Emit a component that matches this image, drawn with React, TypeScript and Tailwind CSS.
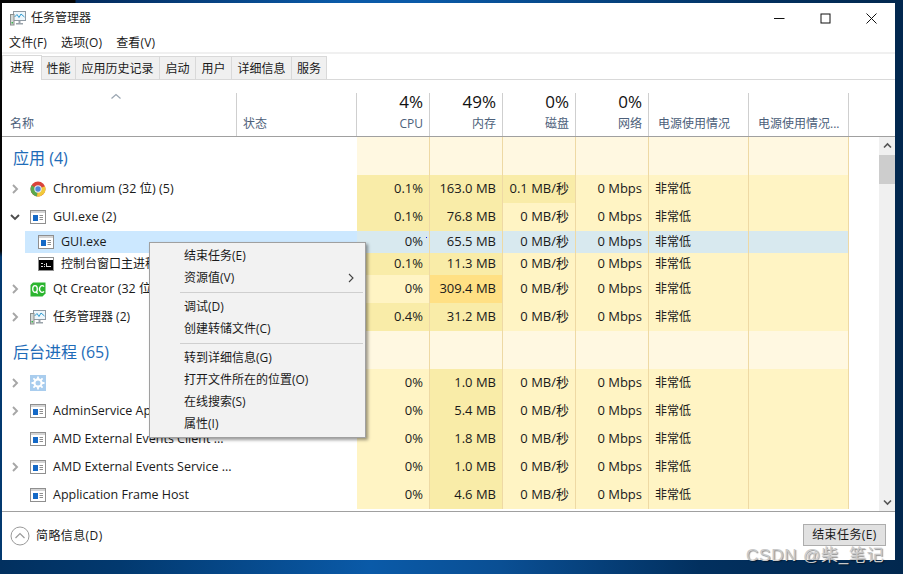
import React from "react";

const font = { fontFamily: '"Open Sans","Noto Sans CJK SC",sans-serif' };

type Tone = "l" | "m" | "s" | "b";
const toneClass: Record<Tone, string> = {
  l: "bg-[#fff4c4]",
  m: "bg-[#f9eca8]",
  s: "bg-[#ffe084]",
  b: "bg-[#d8e9ef]",
};

function Chevron({ open }: { open?: boolean }) {
  return (
    <svg width="10" height="10" viewBox="0 0 10 10" fill="none" stroke={open ? "#4d4d4d" : "#a6a6a6"} strokeWidth="1.9">
      {open ? <path d="M1 3 L5 7 L9 3" /> : <path d="M3 1 L7 5 L3 9" />}
    </svg>
  );
}

function AppIcon() {
  return (
    <svg width="16" height="14" viewBox="0 0 16 14">
      <rect x="0.5" y="0.5" width="15" height="13" fill="#fff" stroke="#8f8f8f" />
      <rect x="1" y="1" width="14" height="2" fill="#d4d4d4" />
      <rect x="3" y="5" width="5" height="6" fill="#1469c7" />
      <path d="M9.5 5.5h3.5M9.5 7.5h3.5M9.5 9.5h3.5" stroke="#8f8f8f" />
    </svg>
  );
}

function ChromeIcon() {
  return (
    <svg width="16" height="16" viewBox="0 0 16 16">
      <circle cx="8" cy="8" r="7.5" fill="#d9433a" />
      <path d="M8 8 L1.5 4.3 A7.5 7.5 0 0 0 7 15.4 Z" fill="#5aa84d" />
      <path d="M8 8 L15 5.2 A7.5 7.5 0 0 1 7 15.4 Z" fill="#f0c93a" />
      <circle cx="8" cy="8" r="3.7" fill="#e8eef5" />
      <circle cx="8" cy="8" r="2.7" fill="#4f86d9" />
    </svg>
  );
}

function ConsoleIcon() {
  return (
    <svg width="16" height="14" viewBox="0 0 16 14">
      <rect x="0.5" y="0.5" width="15" height="13" fill="#fff" stroke="#8f8f8f" />
      <rect x="1" y="3" width="14" height="10" fill="#000" />
      <path d="M3 6h2v1H3v2h2v1H3zM6 7h1v1H6zM6 9h1v1H6zM8 6h1v3h2v1H8zM11 9h2v1h-2z" fill="#ddd" />
    </svg>
  );
}

function QtIcon() {
  return (
    <svg width="16" height="15" viewBox="0 0 16 15">
      <path d="M3 0.5H15.5V11.5L12.5 14.5H0.5V3Z" fill="#2bb52f" />
      <ellipse cx="5" cy="7" rx="2.3" ry="3.4" fill="none" stroke="#fff" strokeWidth="1.3" />
      <path d="M6 9.5l1.6 2.2" fill="none" stroke="#fff" strokeWidth="1.3" />
      <path d="M14 4.6a2.6 3.4 0 1 0 0 4.8" fill="none" stroke="#fff" strokeWidth="1.3" />
    </svg>
  );
}

function TaskIcon() {
  return (
    <svg width="16" height="16" viewBox="0 0 16 16">
      <rect x="3.5" y="1.5" width="12" height="9" fill="#eef6fb" stroke="#8f9aa3" />
      <path d="M4.5 7 L7 4.5 L9 7.5 L11 4 L14.5 7" fill="none" stroke="#2f9bd0" />
      <rect x="0.5" y="4.5" width="3.5" height="10.5" fill="#d3d8d6" stroke="#8a8f8d" />
      <rect x="1.5" y="12" width="1.5" height="1.5" fill="#39b54a" />
      <path d="M9.5 11v2" stroke="#9aa3aa" strokeWidth="2" />
      <rect x="6" y="13" width="7" height="1.5" fill="#9aa3aa" />
    </svg>
  );
}

function GearIcon() {
  return (
    <svg width="16" height="16" viewBox="0 0 16 16">
      <rect width="16" height="16" fill="#a9cdee" />
      <circle cx="8" cy="8" r="3.6" fill="none" stroke="#fff" strokeWidth="2.2" />
      <path d="M8 1.5v2.5M8 12v2.5M1.5 8H4M12 8h2.5M3.4 3.4l1.8 1.8M10.8 10.8l1.8 1.8M12.6 3.4l-1.8 1.8M5.2 10.8l-1.8 1.8" stroke="#fff" strokeWidth="1.8" />
    </svg>
  );
}

const GRID = "grid grid-cols-[235px_120px_73px_73px_73px_73px_100px_100px] shrink-0";

type Row = {
  name: string;
  icon: React.ReactNode;
  h: string;
  chev?: "open" | "closed";
  child?: boolean;
  selected?: boolean;
  cjk?: boolean;
  cpu: [string, Tone];
  mem: [string, Tone];
  disk: [string, Tone];
};

const val = (x: string, t: Tone): [string, Tone] => [x, t];

const appRows: Row[] = [
  { name: "Chromium (32 位) (5)", icon: <ChromeIcon />, h: "h-[28px]", chev: "closed", cpu: val("0.1%", "m"), mem: val("163.0 MB", "m"), disk: val("0.1 MB/秒", "m") },
  { name: "GUI.exe (2)", icon: <AppIcon />, h: "h-[28px]", chev: "open", cpu: val("0.1%", "m"), mem: val("76.8 MB", "m"), disk: val("0 MB/秒", "l") },
  { name: "GUI.exe", icon: <AppIcon />, h: "h-[22px]", child: true, selected: true, cpu: val("0%", "b"), mem: val("65.5 MB", "b"), disk: val("0 MB/秒", "b") },
  { name: "控制台窗口主进程", icon: <ConsoleIcon />, h: "h-[22px]", child: true, cjk: true, cpu: val("0.1%", "m"), mem: val("11.3 MB", "m"), disk: val("0 MB/秒", "l") },
  { name: "Qt Creator (32 位) (2)", icon: <QtIcon />, h: "h-[28px]", chev: "closed", cpu: val("0%", "l"), mem: val("309.4 MB", "s"), disk: val("0 MB/秒", "l") },
  { name: "任务管理器 (2)", icon: <TaskIcon />, h: "h-[28px]", chev: "closed", cjk: true, cpu: val("0.4%", "m"), mem: val("31.2 MB", "m"), disk: val("0 MB/秒", "l") },
];

const bgRows: Row[] = [
  { name: "", icon: <GearIcon />, h: "h-[28px]", chev: "closed", cpu: val("0%", "l"), mem: val("1.0 MB", "m"), disk: val("0 MB/秒", "l") },
  { name: "AdminService Application", icon: <AppIcon />, h: "h-[28px]", chev: "closed", cpu: val("0%", "l"), mem: val("5.4 MB", "m"), disk: val("0 MB/秒", "l") },
  { name: "AMD External Events Client ...", icon: <AppIcon />, h: "h-[28px]", cpu: val("0%", "l"), mem: val("1.8 MB", "m"), disk: val("0 MB/秒", "l") },
  { name: "AMD External Events Service ...", icon: <AppIcon />, h: "h-[28px]", chev: "closed", cpu: val("0%", "l"), mem: val("1.0 MB", "m"), disk: val("0 MB/秒", "l") },
  { name: "Application Frame Host", icon: <AppIcon />, h: "h-[28px]", cpu: val("0%", "l"), mem: val("4.6 MB", "m"), disk: val("0 MB/秒", "l") },
];

function Cell({ v, t, align = "right" }: { v?: string; t: Tone; align?: "right" | "left" }) {
  return (
    <div
      className={`${toneClass[t]} border-r border-[#eed9a4] flex items-center text-[#1a1a1a] whitespace-nowrap ${
        align === "right" ? "justify-end pr-[6px] text-[13px]" : "pl-[6px] text-[12px]"
      }`}
    >
      {v}
    </div>
  );
}

function ProcessRow({ r }: { r: Row }) {
  const blue = r.selected;
  return (
    <div className={`${GRID} ${r.h}`}>
      <div className={`col-span-2 flex items-center text-[#1a1a1a] whitespace-nowrap overflow-hidden ${r.cjk ? "text-[12px]" : "text-[12.5px]"} ${r.child ? "ml-[23px] pl-[13px]" : ""} ${blue ? "bg-[#cce8ff]" : ""}`}>
        {!r.child && (
          <div className="w-[28px] pl-[8px] flex items-center shrink-0">
            {r.chev && <Chevron open={r.chev === "open"} />}
          </div>
        )}
        <div className="w-[23px] shrink-0 flex items-center">{r.icon}</div>
        <span>{r.name}</span>
      </div>
      <Cell v={r.cpu[0]} t={r.cpu[1]} />
      <Cell v={r.mem[0]} t={r.mem[1]} />
      <Cell v={r.disk[0]} t={r.disk[1]} />
      <Cell v="0 Mbps" t={blue ? "b" : "l"} />
      <Cell v="非常低" t={blue ? "b" : "l"} align="left" />
      <Cell t={blue ? "b" : "l"} />
    </div>
  );
}

function GroupRow({ title, h }: { title: string; h: string }) {
  return (
    <div className={`${GRID} ${h}`}>
      <div className="col-span-2 flex items-center pl-[11px] pt-[4px] text-[16px] text-[#1e6cb8] whitespace-nowrap">{title}</div>
      {[0, 1, 2, 3, 4, 5].map((i) => (
        <div key={i} className="bg-[#fff8e1] border-r border-[#eed9a4]" />
      ))}
    </div>
  );
}

function HeadNum({ pct, label }: { pct: string; label: string }) {
  return (
    <div className="border-r border-[#cfcfcf] flex flex-col items-end pr-[6px]">
      <span className="text-[17px] leading-[20px] text-[#111] -mt-[1px]">{pct}</span>
      <span className="text-[12px] leading-[16px] mt-[4px] text-[#4c607a]">{label}</span>
    </div>
  );
}

const Item = ({ children, arrow }: { children: React.ReactNode; arrow?: boolean }) => (
  <div className="h-[22px] flex items-center pl-[34px] pr-[10px] justify-between text-[12px] text-[#1a1a1a]">
    <span>{children}</span>
    {arrow && (
      <svg width="8" height="10" viewBox="0 0 8 10" fill="none" stroke="#444" strokeWidth="1.1">
        <path d="M2 1 L6 5 L2 9" />
      </svg>
    )}
  </div>
);

const MenuSep = () => <div className="h-[7px] flex items-center pl-[30px] pr-[2px]"><div className="h-px w-full bg-[#cfcfcf]" /></div>;

export default function App() {
  const tabs = [
    ["性能", "w-[34px]"],
    ["应用历史记录", "w-[84px]"],
    ["启动", "w-[36px]"],
    ["用户", "w-[36px]"],
    ["详细信息", "w-[60px]"],
    ["服务", "w-[35px]"],
  ];
  return (
    <div className="w-[903px] h-[574px] flex flex-col relative overflow-hidden" style={font}>
      <div className="h-[3px] shrink-0 bg-[linear-gradient(90deg,#050505_0,#050505_75px,#03295a_76px,#0a5aa8_340px,#0a5aa8_420px,#02305f_760px,#02284f_903px)]" />
      <div className="flex flex-1 min-h-0">
        <div className="w-[2px] shrink-0 bg-[linear-gradient(180deg,#050505_0,#050505_248px,#03396f_254px,#03396f_557px)]" />
        <div className="flex-1 min-w-0 bg-white flex flex-col">
          {/* title bar */}
          <div className="h-[30px] shrink-0 flex items-center">
            <div className="ml-[8px] mr-[5px] flex"><TaskIcon /></div>
            <span className="text-[12px] text-[#1a1a1a]">任务管理器</span>
            <div className="ml-auto flex items-center">
              <div className="w-[46px] flex justify-center">
                <svg width="11" height="11" viewBox="0 0 11 11"><path d="M0 5.5h10.5" stroke="#111" strokeWidth="1" /></svg>
              </div>
              <div className="w-[46px] flex justify-center">
                <svg width="11" height="11" viewBox="0 0 11 11"><rect x="1" y="1" width="9" height="9" fill="none" stroke="#111" /></svg>
              </div>
              <div className="w-[46px] flex justify-center mr-[1px]">
                <svg width="11" height="11" viewBox="0 0 11 11"><path d="M0.5 0.5l10 10M10.5 0.5l-10 10" stroke="#111" /></svg>
              </div>
            </div>
          </div>
          {/* menu */}
          <div className="h-[19px] shrink-0 flex items-center gap-[14px] pl-[7px] text-[12px] text-[#1a1a1a] tracking-[0.15px]">
            <span>文件(F)</span>
            <span>选项(O)</span>
            <span>查看(V)</span>
          </div>
          <div className="h-[2px] shrink-0 bg-[#f0f0f0]" />
          {/* tabs */}
          <div className="h-[26px] shrink-0 flex items-end border-b border-[#d9d9d9]">
            <div className="w-[40px] h-[25px] -mb-px bg-white border border-b-0 border-[#d9d9d9] flex items-center justify-center text-[12px] text-[#1a1a1a] relative">进程</div>
            {tabs.map(([t, w]) => (
              <div key={t} className={`${w} h-[23px] pt-[2px] bg-[#f0f0f0] border border-l-0 border-b-0 border-[#d9d9d9] flex items-center justify-center text-[12px] text-[#1a1a1a]`}>
                {t}
              </div>
            ))}
          </div>
          {/* table */}
          <div className="flex-1 min-h-0 flex mt-[13px]">
            <div className="flex-1 min-w-0 flex flex-col">
              <div className={`${GRID} h-[43px]`}>
                <div className="border-r border-[#cfcfcf] relative flex items-end pl-[8px] pb-[3px] text-[12px] text-[#4c607a]">
                  <span>名称</span>
                  <svg className="absolute left-[108px] top-0" width="12" height="7" viewBox="0 0 12 7" fill="none" stroke="#9aa5b1" strokeWidth="1.2">
                    <path d="M1.5 5.5 L6 1.5 L10.5 5.5" />
                  </svg>
                </div>
                <div className="border-r border-[#cfcfcf] flex items-end pl-[6px] pb-[3px] text-[12px] text-[#4c607a]">状态</div>
                <HeadNum pct="4%" label="CPU" />
                <HeadNum pct="49%" label="内存" />
                <HeadNum pct="0%" label="磁盘" />
                <HeadNum pct="0%" label="网络" />
                <div className="border-r border-[#cfcfcf] flex items-end pl-[9px] pb-[3px] text-[12px] text-[#4c607a]">电源使用情况</div>
                <div className="border-r border-[#cfcfcf] flex items-end pl-[9px] pb-[3px] text-[12px] text-[#4c607a] whitespace-nowrap">电源使用情况...</div>
              </div>
              <div className="h-px shrink-0 bg-[#a0a0a0]" />
              <div className="flex-1 min-h-0 overflow-hidden flex flex-col">
                <GroupRow title="应用 (4)" h="h-[38px]" />
                {appRows.map((r) => (
                  <ProcessRow key={r.name} r={r} />
                ))}
                <GroupRow title="后台进程 (65)" h="h-[38px]" />
                {bgRows.map((r) => (
                  <ProcessRow key={r.name + r.mem[0]} r={r} />
                ))}
              </div>
            </div>
            <div className="w-[16px] shrink-0 flex flex-col">
              <div className="h-[44px] border-b border-[#a0a0a0]" />
              <div className="flex-1 bg-[#f0f0f0] flex flex-col items-center">
                <svg className="mt-[5px]" width="9" height="7" viewBox="0 0 9 7" fill="none" stroke="#555" strokeWidth="1.6"><path d="M1 5.5 L4.5 2 L8 5.5" /></svg>
                <div className="w-full h-[29px] bg-[#cdcdcd] mt-[6px]" />
                <svg className="mt-auto mb-[5px]" width="9" height="7" viewBox="0 0 9 7" fill="none" stroke="#555" strokeWidth="1.6"><path d="M1 1.5 L4.5 5 L8 1.5" /></svg>
              </div>
            </div>
          </div>
          <div className="h-px shrink-0 bg-[#a0a0a0]" />
          {/* footer */}
          <div className="h-[48px] shrink-0 flex items-center">
            <svg className="ml-[8px]" width="20" height="20" viewBox="0 0 20 20" fill="none" stroke="#9a9a9a">
              <circle cx="10" cy="10" r="9" />
              <path d="M5.5 12 L10 7.5 L14.5 12" strokeWidth="1.2" />
            </svg>
            <span className="ml-[6px] text-[12px] text-[#1a1a1a] tracking-[0.4px]">简略信息(D)</span>
            <div className="ml-auto mr-[9px] mt-[-2px] w-[83px] h-[22px] bg-[#e1e1e1] border border-[#adadad] flex items-center justify-center text-[12px] text-[#1a1a1a] tracking-[0.4px]">结束任务(E)</div>
          </div>
        </div>
        <div className="w-[8px] shrink-0 bg-[#02284f]" />
      </div>
      <div className="h-[14px] shrink-0 bg-[linear-gradient(90deg,#02305f_0,#02396f_120px,#0a5aa8_370px,#0a4f94_500px,#02305f_700px,#02284f_903px)]" />

      {/* context menu */}
      <div className="absolute left-[149px] top-[242px] w-[217px] h-[196px] bg-[#f2f2f2] border border-[#a0a0a0] shadow-[2px_2px_3px_rgba(0,0,0,0.4)] pt-[2px]">
        <Item>结束任务(E)</Item>
        <Item arrow>资源值(V)</Item>
        <MenuSep />
        <Item>调试(D)</Item>
        <Item>创建转储文件(C)</Item>
        <MenuSep />
        <Item>转到详细信息(G)</Item>
        <Item>打开文件所在的位置(O)</Item>
        <Item>在线搜索(S)</Item>
        <Item>属性(I)</Item>
      </div>

      {/* watermark */}
      <div className="absolute left-[746px] top-[543px] text-[17px] tracking-[0.8px] text-[#c9c9c9] whitespace-nowrap [text-shadow:1px_1px_1px_rgba(0,0,0,0.45)]" style={{ fontFamily: '"Liberation Sans","Noto Sans CJK SC",sans-serif' }}>
        CSDN @柴_笔记
      </div>
      {/* blue dot */}
      <div className="absolute left-[426px] top-[237px] w-px h-px bg-[#2020e0]" />
    </div>
  );
}
